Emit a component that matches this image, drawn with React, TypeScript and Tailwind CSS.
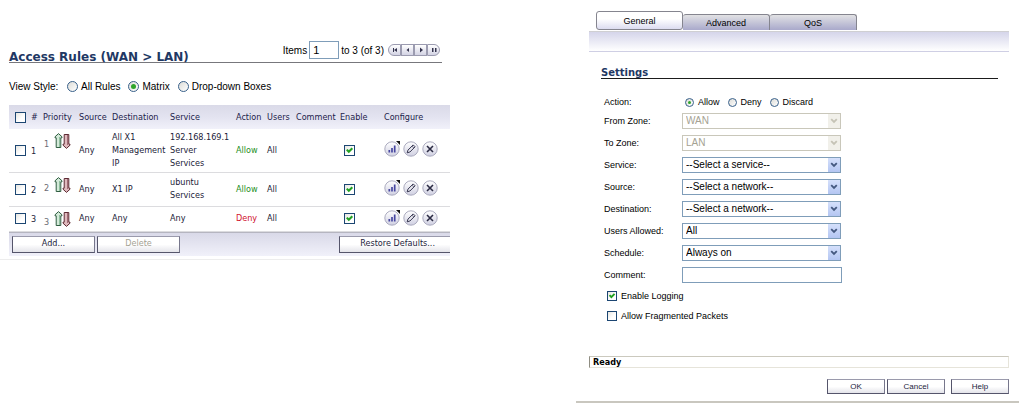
import { useId, type ReactNode } from 'react';
import clsx from 'clsx';

type Rule = {
  priority: number;
  source: string;
  destination: string;
  service: string;
  action: 'Allow' | 'Deny';
  users: string;
  rowClass: string;
};

const rules: Rule[] = [
  { priority: 1, source: 'Any', destination: 'All X1 Management IP', service: '192.168.169.1 Server Services', action: 'Allow', users: 'All', rowClass: 'h-[43px]' },
  { priority: 2, source: 'Any', destination: 'X1 IP', service: 'ubuntu Services', action: 'Allow', users: 'All', rowClass: 'h-[34px]' },
  { priority: 3, source: 'Any', destination: 'Any', service: 'Any', action: 'Deny', users: 'All', rowClass: 'h-[25px]' },
];

const selects = [
  { label: 'From Zone:', value: 'WAN', disabled: true },
  { label: 'To Zone:', value: 'LAN', disabled: true },
  { label: 'Service:', value: '--Select a service--' },
  { label: 'Source:', value: '--Select a network--' },
  { label: 'Destination:', value: '--Select a network--' },
  { label: 'Users Allowed:', value: 'All' },
  { label: 'Schedule:', value: 'Always on' },
];

const tahoma = "font-['DejaVu_Sans_Condensed','DejaVu_Sans',sans-serif]";
const arial = "font-['Liberation_Sans',Arial,sans-serif]";
const verdana = "font-['DejaVu_Sans',Verdana,sans-serif]";

function Radio({ name, label, checked, small }: { name: string; label: string; checked?: boolean; small?: boolean }) {
  return (
    <label className={clsx('flex items-center', small ? 'gap-1' : 'gap-[3px]')}>
      <span className={clsx('relative block shrink-0', small ? 'size-[9px]' : 'size-[11px]')}>
        <input
          type="radio"
          name={name}
          defaultChecked={checked}
          className="peer block size-full appearance-none rounded-full border border-[#38608a] bg-linear-to-br from-[#dcdcd7] to-white"
        />
        <span className="pointer-events-none absolute inset-[3px] hidden rounded-full bg-[#2fa52b] peer-checked:block" />
      </span>
      {label}
    </label>
  );
}

function CheckBox({ id, label, checked, small }: { id?: string; label?: string; checked?: boolean; small?: boolean }) {
  return (
    <span className={clsx('relative block shrink-0', small ? 'size-[10px]' : 'size-[11px]')}>
      <input
        id={id}
        type="checkbox"
        aria-label={label}
        defaultChecked={checked}
        className="peer block size-full appearance-none border border-[#1c4672] bg-linear-to-br from-[#e6e6e1] to-white to-60%"
      />
      <svg viewBox="0 0 11 11" className="pointer-events-none absolute inset-0 hidden size-full peer-checked:block">
        <path d="M2.8 4.6 L4.8 6.8 L8.3 3.2" fill="none" stroke="#21a121" strokeWidth="2.1" />
      </svg>
    </span>
  );
}

function PushButton({ children, disabled, className }: { children: ReactNode; disabled?: boolean; className?: string }) {
  return (
    <button
      type="button"
      disabled={disabled}
      className={clsx(
        'border border-t-[#9a9aac] border-r-[#77778c] border-b-[#55556b] border-l-[#55556b] bg-linear-to-b from-white from-50% to-[#e4e4ea] text-center text-[#1c1c3c] disabled:text-[#a5a293]',
        className,
      )}
    >
      {children}
    </button>
  );
}

function PagerButton({ label, className, children }: { label: string; className?: string; children: ReactNode }) {
  return (
    <button
      type="button"
      aria-label={label}
      className={clsx('flex h-3 w-[13px] items-center justify-center border border-[#9b9bb0] bg-linear-to-b from-white to-[#d3d3e4]', className)}
    >
      <svg viewBox="0 0 8 8" className="size-2" fill="#34344e">
        {children}
      </svg>
    </button>
  );
}

function PriorityArrows() {
  return (
    <svg viewBox="0 0 17 16" className="h-4 w-[17px]" strokeWidth="1">
      <path d="M4.5 .6 L8 3.8 V4.8 H6.8 V14.5 H2.2 V4.8 H1 V3.8 Z" fill="#d3ead9" stroke="#2f5c40" />
      <path d="M5.5 4 V14" stroke="#8fbd9d" />
      <path d="M12.5 15.4 L16 12.2 V11.2 H14.8 V1.5 H10.2 V11.2 H9 V12.2 Z" fill="#dfb9bd" stroke="#5d2a33" />
      <path d="M13.5 2 V12" stroke="#a06a74" />
    </svg>
  );
}

function RoundButton({ label, children }: { label: string; children: ReactNode }) {
  return (
    <button type="button" aria-label={label} className="block size-4">
      <svg viewBox="0 0 16 16" className="size-4">
        <circle cx="8" cy="8" r="7.2" fill="url(#ball)" stroke="#a3a3b8" strokeWidth=".9" />
        {children}
      </svg>
    </button>
  );
}

function RuleRow({ rule }: { rule: Rule }) {
  return (
    <tr className={clsx('border-b border-[#dcdcdf]', rule.rowClass)}>
      <td className="pl-[6px]">
        <CheckBox label={`Select rule ${rule.priority}`} />
      </td>
      <td className="pt-[2px]">{rule.priority}</td>
      <td className="pt-1 align-top">
        <button type="button" aria-label={`Change priority ${rule.priority}`} className="flex items-end gap-[5px] pl-px">
          <span className="leading-[10px] text-[#6c6c74]">{rule.priority}</span>
          <PriorityArrows />
        </button>
      </td>
      <td>{rule.source}</td>
      <td className="pr-1">{rule.destination}</td>
      <td className="pr-1">{rule.service}</td>
      <td className={rule.action === 'Allow' ? 'text-[#1d8f1d]' : 'text-[#d0102c]'}>{rule.action}</td>
      <td>{rule.users}</td>
      <td />
      <td className="pl-1">
        <CheckBox label={`Enable rule ${rule.priority}`} checked />
      </td>
      <td>
        <div className="flex gap-[3px] pb-[2px]">
          <RoundButton label="Statistics">
            <path d="M5.3 11.5 V9 M8 11.5 V7 M10.7 11.5 V4.5" stroke="#4747a0" strokeWidth="1.7" />
            <path d="M12 0 H16 V4 Z" fill="#111" />
          </RoundButton>
          <RoundButton label="Edit">
            <path d="M4.2 11.8 L5 9.1 L10.2 3.9 L12.1 5.8 L6.9 11 Z" fill="#e8e8f1" stroke="#34344e" strokeWidth="1" />
            <path d="M9 5.2 L10.9 7" stroke="#34344e" strokeWidth=".7" />
          </RoundButton>
          <RoundButton label="Delete">
            <path d="M5 5 L11 11 M11 5 L5 11" stroke="#2c2c44" strokeWidth="1.6" />
          </RoundButton>
        </div>
      </td>
    </tr>
  );
}

function AccessRules() {
  return (
    <section className="min-w-0 self-start border-b border-[#ededed] pb-[3px] pl-[9px]">
      <svg className="absolute size-0" aria-hidden="true">
        <defs>
          <linearGradient id="ball" x1="0" y1="0" x2="0" y2="1">
            <stop offset="0" stopColor="#ffffff" />
            <stop offset="1" stopColor="#d0d0e2" />
          </linearGradient>
        </defs>
      </svg>

      <header className="mt-[41px] mr-2 flex items-end justify-between border-b border-[#77777c]">
        <h1 className={clsx('text-[12px] leading-[10px] font-bold whitespace-nowrap text-[#1f3864]', verdana)}>
          Access Rules (WAN &gt; LAN)
        </h1>
        <div className={clsx('mb-[3px] flex items-center text-[10px]', arial)}>
          <label htmlFor="first-item">Items</label>
          <input
            id="first-item"
            defaultValue="1"
            className="mx-[2px] h-[18px] w-[30px] border border-[#7f9db9] px-[3px] text-[11px]"
          />
          <span>to 3 (of 3)</span>
          <div className="mr-[2px] ml-1 flex">
            <PagerButton label="First page" className="rounded-l-full">
              <path d="M2 2 H3 V6 H2 Z M6 2 V6 L3 4 Z" />
            </PagerButton>
            <PagerButton label="Previous page">
              <path d="M5 2 V6 L2.5 4 Z" />
            </PagerButton>
            <PagerButton label="Next page">
              <path d="M3 1.5 V6.5 L6 4 Z" />
            </PagerButton>
            <PagerButton label="Last page" className="rounded-r-full">
              <path d="M2 2 H3.5 V6 H2 Z M5 2 H6.5 V6 H5 Z" />
            </PagerButton>
          </div>
        </div>
      </header>

      <div className={clsx('mt-[15px] flex h-4 items-center text-[10px]', arial)}>
        <span className="w-[58px]">View Style:</span>
        <div className="flex gap-2">
          <Radio name="view-style" label="All Rules" />
          <Radio name="view-style" label="Matrix" checked />
          <Radio name="view-style" label="Drop-down Boxes" />
        </div>
      </div>

      <table className={clsx('mt-[11px] w-full table-fixed border-collapse text-left text-[9px] leading-[13px] text-[#222238]', tahoma)}>
        <colgroup>
          <col className="w-[22px]" />
          <col className="w-3" />
          <col className="w-9" />
          <col className="w-[33px]" />
          <col className="w-[58px]" />
          <col className="w-[66px]" />
          <col className="w-[31px]" />
          <col className="w-[29px]" />
          <col className="w-11" />
          <col className="w-11" />
          <col />
        </colgroup>
        <thead>
          <tr className="h-6 bg-linear-to-b from-[#dadae8] via-[#e3e3f0] to-[#f1f1fa] text-[#1c1c4a] [&>th]:font-normal">
            <th className="pl-[6px]">
              <CheckBox label="Select all rules" />
            </th>
            <th>#</th>
            <th>Priority</th>
            <th>Source</th>
            <th>Destination</th>
            <th>Service</th>
            <th>Action</th>
            <th>Users</th>
            <th>Comment</th>
            <th>Enable</th>
            <th>Configure</th>
          </tr>
        </thead>
        <tbody>
          {rules.map((rule) => (
            <RuleRow key={rule.priority} rule={rule} />
          ))}
        </tbody>
      </table>

      <footer
        className={clsx(
          'flex h-6 items-center justify-between border-t border-[#b5b5c0] bg-linear-to-b from-[#d9d9e8] to-[#f1f1fa] pl-[3px] text-[9px]',
          tahoma,
        )}
      >
        <div className="flex gap-[2px]">
          <PushButton className="h-[17px] w-[83px]">Add...</PushButton>
          <PushButton className="h-[17px] w-[83px]" disabled>
            Delete
          </PushButton>
        </div>
        <PushButton className="h-[17px] border-r-0 px-[15px] pl-5">Restore Defaults...</PushButton>
      </footer>
    </section>
  );
}

function SelectField({ label, value, disabled }: { label: string; value: string; disabled?: boolean }) {
  const id = useId();
  return (
    <div className="flex items-center">
      <label htmlFor={id} className="w-[78px]">
        {label}
      </label>
      <span className="relative block w-[159px]">
        <select
          id={id}
          disabled={disabled}
          className="block h-4 w-full appearance-none border border-[#7f9db9] bg-white px-[3px] text-[10px] leading-[14px] text-black opacity-100 disabled:border-[#c9c7ba] disabled:text-[#a5a293]"
        >
          <option>{value}</option>
        </select>
        <span
          className={clsx(
            'pointer-events-none absolute inset-y-px right-px flex w-3 items-center justify-center',
            disabled ? 'bg-[#f1f0ea]' : 'bg-linear-to-b from-[#d5e0fb] to-[#b4c6f2]',
          )}
        >
          <svg viewBox="0 0 8 6" className="h-[6px] w-2">
            <path d="M1.2 1.2 L4 4 L6.8 1.2" fill="none" stroke={disabled ? '#c5c3b6' : '#44587f'} strokeWidth="1.8" />
          </svg>
        </span>
      </span>
    </div>
  );
}

function Tab({ label, active }: { label: string; active?: boolean }) {
  return (
    <button
      type="button"
      role="tab"
      aria-selected={!!active}
      className={clsx(
        'w-[87px] rounded-t-[3px] border border-[#85858f] text-center',
        active
          ? 'h-[19px] rounded-b-[3px] bg-linear-to-b from-white from-40% to-[#dcdcf0]'
          : 'h-4 border-b-0 border-l-0 bg-linear-to-b from-[#e2e2e4] to-[#a9a9cb]',
      )}
    >
      {label}
    </button>
  );
}

function RuleSettings() {
  return (
    <section className={clsx('min-w-0 border-b-2 border-[#c9c7bf] pt-[11px] pl-[13px] text-[9px] leading-3 text-black', arial)}>
      <div className="mr-[10px]">
        <div role="tablist" className="flex h-5 items-end pb-px pl-[7px]">
          <Tab label="General" active />
          <Tab label="Advanced" />
          <Tab label="QoS" />
        </div>
        <div className="h-[21px] border-t border-b border-t-[#cfcfd2] border-b-[#cfcfe4] bg-linear-to-b from-[#d5d5ea] to-white" />

        <h2 className={clsx('mt-4 mr-[11px] ml-3 border-b border-[#1b1b1b] text-[10px] leading-[10px] font-bold text-[#1f3864]', verdana)}>
          Settings
        </h2>

        <form className="mt-4 pl-[15px]">
          <div className="flex h-[14px] items-center">
            <span className="w-[81px]">Action:</span>
            <div className="flex gap-2">
              <Radio name="action" label="Allow" checked small />
              <Radio name="action" label="Deny" small />
              <Radio name="action" label="Discard" small />
            </div>
          </div>

          <div className="mt-1 flex flex-col gap-[6px]">
            {selects.map((field) => (
              <SelectField key={field.label} {...field} />
            ))}
            <div className="flex items-center">
              <label htmlFor="comment" className="w-[78px]">
                Comment:
              </label>
              <input id="comment" type="text" className="h-4 w-[160px] border border-[#7f9db9] px-[3px] text-[10px]" />
            </div>
          </div>

          <div className="mt-[7px] flex flex-col gap-2 pl-[3px]">
            <div className="flex items-center gap-1">
              <CheckBox id="logging" checked small />
              <label htmlFor="logging">Enable Logging</label>
            </div>
            <div className="flex items-center gap-1">
              <CheckBox id="fragments" small />
              <label htmlFor="fragments">Allow Fragmented Packets</label>
            </div>
          </div>
        </form>

        <div className={clsx('mt-[34px] border border-t-[#cbc9be] border-r-[#e6e4da] border-b-[#e6e4da] border-l-[#8f8d82] pl-[3px] leading-[10px] font-bold', tahoma)}>
          Ready
        </div>

        <div className="mt-[11px] mb-[7px] flex justify-end text-[8px] leading-3">
          <PushButton className="h-[15px] w-[58px]">OK</PushButton>
          <PushButton className="ml-[2px] h-[15px] w-[58px]">Cancel</PushButton>
          <PushButton className="ml-[6px] h-[15px] w-[58px]">Help</PushButton>
        </div>
      </div>
    </section>
  );
}

export default function App() {
  return (
    <main className="grid grid-cols-[minmax(0,450fr)_minmax(0,443fr)] gap-x-[126px] bg-white">
      <AccessRules />
      <RuleSettings />
    </main>
  );
}
